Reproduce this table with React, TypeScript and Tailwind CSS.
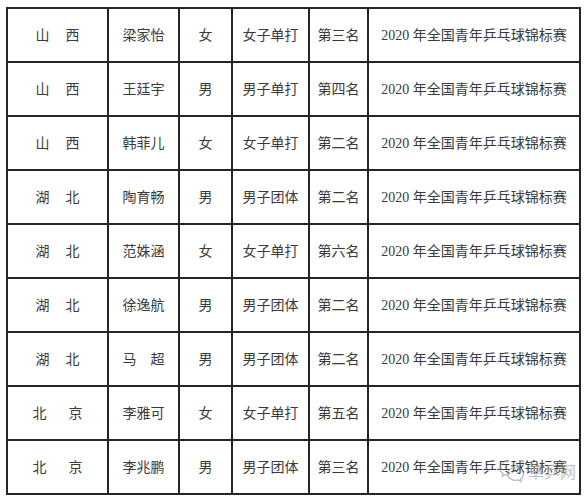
import React from 'react';

interface Row {
  region: [string, string];
  regionGap: number;
  name: string;
  gender: string;
  event: string;
  rank: string;
}

const rows: Row[] = [
  { region: ['山', '西'], regionGap: 16, name: '梁家怡', gender: '女', event: '女子单打', rank: '第三名' },
  { region: ['山', '西'], regionGap: 16, name: '王廷宇', gender: '男', event: '男子单打', rank: '第四名' },
  { region: ['山', '西'], regionGap: 16, name: '韩菲儿', gender: '女', event: '女子单打', rank: '第二名' },
  { region: ['湖', '北'], regionGap: 16, name: '陶育畅', gender: '男', event: '男子团体', rank: '第二名' },
  { region: ['湖', '北'], regionGap: 16, name: '范姝涵', gender: '女', event: '女子单打', rank: '第六名' },
  { region: ['湖', '北'], regionGap: 16, name: '徐逸航', gender: '男', event: '男子团体', rank: '第二名' },
  { region: ['湖', '北'], regionGap: 16, name: '马　超', gender: '男', event: '男子团体', rank: '第二名' },
  { region: ['北', '京'], regionGap: 22, name: '李雅可', gender: '女', event: '女子单打', rank: '第五名' },
  { region: ['北', '京'], regionGap: 22, name: '李兆鹏', gender: '男', event: '男子团体', rank: '第三名' },
];

const cell = 'border-2 border-[#262626] text-center align-middle p-0';

export default function App() {
  return (
    <div
      className="relative w-[586px] h-[500px] bg-white overflow-hidden text-[14px] text-[#3a3a3a]"
      style={{ fontFamily: '"Liberation Serif", "Noto Sans CJK SC", serif' }}
    >
      <div className="pt-[7px] pl-[6px]">
        <table className="table-fixed border-collapse w-[573px]">
          <colgroup>
            <col className="w-[101px]" />
            <col className="w-[71px]" />
            <col className="w-[53px]" />
            <col className="w-[77px]" />
            <col className="w-[59px]" />
            <col className="w-[212px]" />
          </colgroup>
          <tbody>
            {rows.map((r, i) => (
              <tr key={i} className="h-[54px]">
                <td className={cell}>
                  <span className="inline-flex" style={{ gap: r.regionGap }}>
                    <span>{r.region[0]}</span>
                    <span>{r.region[1]}</span>
                  </span>
                </td>
                <td className={cell}>{r.name}</td>
                <td className={cell}>{r.gender}</td>
                <td className={cell}>{r.event}</td>
                <td className={cell}>{r.rank}</td>
                <td className={cell}>2020 年全国青年乒乓球锦标赛</td>
              </tr>
            ))}
          </tbody>
        </table>
      </div>

      {/* watermark */}
      <div className="absolute left-[498px] top-[458px] flex items-center gap-[2px] opacity-70">
        <svg width="28" height="26" viewBox="0 0 28 26" fill="none" stroke="#9a9a9a" strokeWidth="1.2">
          <path d="M11 3C5.5 3 2 6.3 2 10.2c0 2.2 1.2 4.1 3 5.4l-.8 2.8 3.2-1.7c1.1.3 2.3.5 3.6.5" />
          <path d="M17.5 9.5c-4.5 0-8 2.9-8 6.4s3.5 6.4 8 6.4c1 0 2-.1 2.9-.4l2.7 1.5-.7-2.4c1.9-1.2 3.1-3 3.1-5.1 0-3.5-3.5-6.4-8-6.4z" />
          <circle cx="7.8" cy="8.5" r="0.9" fill="#9a9a9a" stroke="none" />
          <circle cx="13.8" cy="8.5" r="0.9" fill="#9a9a9a" stroke="none" />
          <circle cx="14.8" cy="14.5" r="0.8" fill="#9a9a9a" stroke="none" />
          <circle cx="20.2" cy="14.5" r="0.8" fill="#9a9a9a" stroke="none" />
        </svg>
        <span
          className="text-[16px] leading-none text-[#a8a8a8]"
          style={{ fontFamily: '"Noto Sans CJK SC", sans-serif' }}
        >
          草乒网
        </span>
      </div>
    </div>
  );
}
